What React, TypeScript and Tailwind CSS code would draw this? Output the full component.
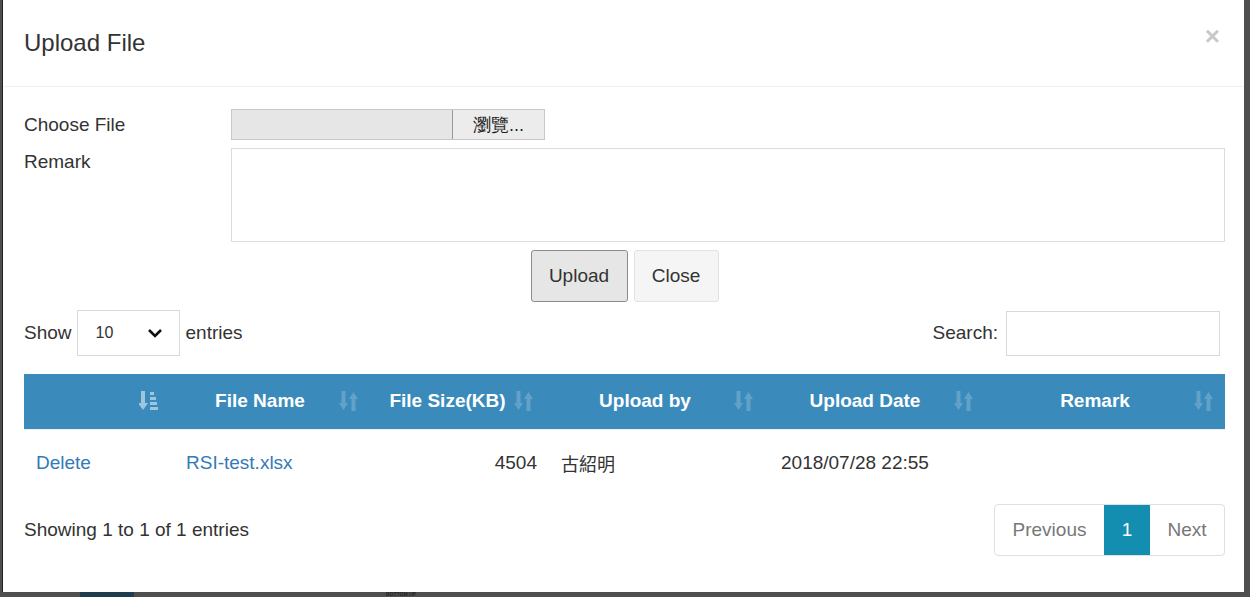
function SortIcon({ active = false }: { active?: boolean }) {
  if (active) {
    return (
      <svg width="20" height="22" viewBox="0 0 20 22" className="opacity-50">
        <rect x="2" y="1" width="4" height="14" fill="#ffffff" />
        <polygon points="-1,13 9,13 4,20" fill="#ffffff" />
        <rect x="11" y="2" width="4" height="3" fill="#ffffff" />
        <rect x="11" y="7" width="6" height="3" fill="#ffffff" />
        <rect x="11" y="12" width="7" height="3" fill="#ffffff" />
        <rect x="11" y="17" width="8" height="3" fill="#ffffff" />
      </svg>
    );
  }
  return (
    <svg width="20" height="22" viewBox="0 0 20 22" className="opacity-20">
      <rect x="2.5" y="1" width="4" height="14" fill="#ffffff" />
      <polygon points="0,13 9,13 4.5,20" fill="#ffffff" />
      <rect x="12.5" y="7" width="4" height="14" fill="#ffffff" />
      <polygon points="10,9 19,9 14.5,2" fill="#ffffff" />
    </svg>
  );
}

function HeadCell({ label, width, active }: { label: string; width: string; active?: boolean }) {
  return (
    <div className={`${width} relative flex h-full items-center justify-center pl-[10px] pr-[30px]`}>
      <span>{label}</span>
      <span className="absolute right-[11px] top-[16px]">
        <SortIcon active={active} />
      </span>
    </div>
  );
}

export default function App() {
  return (
    <div className="relative h-[597px] w-[1250px] overflow-hidden bg-[#4f4f4f] font-['Liberation_Sans',Arial,sans-serif] text-[#333]">
      <div className="absolute bottom-0 left-[80px] h-[5px] w-[54px] bg-[#1d3d4f]" />
      <div className="absolute bottom-0 left-[386px] text-[5px] font-bold leading-[5px] text-[#222]">BOTTOM UP</div>

      <div className="relative ml-[2px] flex h-[592px] w-[1242px] flex-col border-l border-[#222] bg-white">
        {/* header */}
        <div className="flex h-[87px] shrink-0 items-center justify-between border-b border-[#f2f2f2] pl-[21px] pr-[24px]">
          <h1 className="text-[24px] leading-none text-[#333]">Upload File</h1>
          <span className="mt-[-14px] text-[26px] font-bold leading-none text-[#c8c8c8]">×</span>
        </div>

        {/* body */}
        <div className="flex flex-col pl-[21px] pr-[19px] pt-[22px] text-[19px]">
          <div className="flex items-center">
            <label className="w-[207px] leading-[30px]">Choose File</label>
            <div className="flex h-[31px] w-[314px] border border-[#c8c8c8] bg-[#e6e6e6]">
              <div className="flex-1" />
              <button className="h-full w-[92px] border-l border-[#999] bg-[#ececec] text-[18px] leading-none text-[#222]">
                瀏覽...
              </button>
            </div>
          </div>

          <div className="mt-[8px] flex">
            <label className="w-[207px] pt-[1px] leading-[26px]">Remark</label>
            <textarea className="h-[94px] flex-1 resize-none border border-[#dcdcdc] outline-none" />
          </div>

          <div className="mt-[8px] flex justify-center gap-[6px]">
            <button className="h-[52px] w-[97px] rounded-[3px] border border-[#8c8c8c] bg-[#e6e6e6] text-[19px] text-[#333]">
              Upload
            </button>
            <button className="h-[52px] w-[85px] rounded-[3px] border border-[#e2e2e2] bg-[#f5f5f5] text-[19px] text-[#333]">
              Close
            </button>
          </div>

          <div className="mt-[8px] flex items-center justify-between">
            <div className="flex items-center">
              <span>Show</span>
              <div className="ml-[5px] flex h-[46px] w-[103px] items-center justify-between border border-[#d9d9d9] pl-[18px] pr-[16px]">
                <span className="text-[16px]">10</span>
                <svg width="16" height="10" viewBox="0 0 16 10">
                  <polyline points="2,2 8,8 14,2" fill="none" stroke="#111" strokeWidth="2.6" />
                </svg>
              </div>
              <span className="ml-[6px]">entries</span>
            </div>
            <div className="flex items-center">
              <span>Search:</span>
              <input className="ml-[8px] mr-[5px] h-[45px] w-[214px] border border-[#d9d9d9] outline-none" />
            </div>
          </div>

          {/* table */}
          <div className="mt-[18px] flex h-[55px] w-[1201px] items-center bg-[#3a8bbb] font-bold text-white">
            <HeadCell label="" width="w-[146px]" active />
            <HeadCell label="File Name" width="w-[200px]" />
            <HeadCell label="File Size(KB)" width="w-[175px]" />
            <HeadCell label="Upload by" width="w-[220px]" />
            <HeadCell label="Upload Date" width="w-[220px]" />
            <HeadCell label="Remark" width="w-[240px]" />
          </div>
          <div className="flex h-[68px] w-[1201px] items-center border-t border-[#f0f0f0]">
            <div className="w-[146px] pl-[12px] text-[#337ab7]">Delete</div>
            <div className="w-[200px] pl-[16px] text-[#337ab7]">RSI-test.xlsx</div>
            <div className="w-[175px] pr-[8px] text-right">4504</div>
            <div className="w-[220px] pl-[16px] font-['Noto_Sans_CJK_TC',sans-serif] text-[18px]">古紹明</div>
            <div className="w-[220px] pl-[16px]">2018/07/28 22:55</div>
            <div className="w-[240px]" />
          </div>

          <div className="mt-[7px] flex w-[1201px] items-center justify-between">
            <span>Showing 1 to 1 of 1 entries</span>
            <div className="flex h-[52px] overflow-hidden rounded-[4px] border border-[#e0e0e0] text-[#777]">
              <div className="flex w-[109px] items-center justify-center">Previous</div>
              <div className="flex w-[46px] items-center justify-center bg-[#138eb0] text-white">1</div>
              <div className="flex w-[74px] items-center justify-center">Next</div>
            </div>
          </div>
        </div>
      </div>
    </div>
  );
}
